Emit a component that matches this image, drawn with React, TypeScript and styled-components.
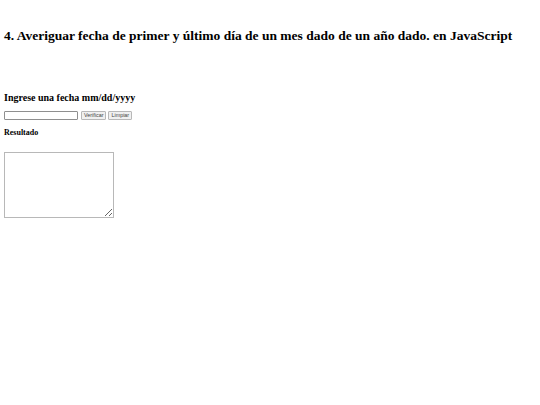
import React from "react";
import styled, { createGlobalStyle } from "styled-components";

const Global = createGlobalStyle`
  html, body { margin: 0; padding: 0; background: #fff; }
  body { font-family: "Liberation Serif", "Times New Roman", serif; color: #000; }
`;

const Page = styled.main`
  padding: 27px 4px 0 4px;
  display: flex;
  flex-direction: column;
`;

const Title = styled.h1`
  margin: 0;
  font-size: 13.5px;
  line-height: 17px;
  font-weight: bold;
  white-space: nowrap;
`;

const Subtitle = styled.h2`
  margin: 47px 0 0 0;
  font-size: 10px;
  line-height: 14px;
  font-weight: bold;
`;

const Form = styled.form`
  margin-top: 6px;
  display: flex;
  align-items: center;
  gap: 2px;
`;

const TextInput = styled.input`
  box-sizing: border-box;
  width: 74px;
  height: 9px;
  margin: 0 1px 0 0;
  padding: 0;
  border: 1px solid #8f8f8f;
  border-radius: 1px;
  background: #fff;
`;

const Button = styled.button`
  box-sizing: border-box;
  height: 9px;
  margin: 0;
  padding: 0 2px;
  border: 1px solid #b8b8b8;
  border-radius: 1px;
  background: #f0f0f0;
  font-family: "Liberation Sans", Arial, sans-serif;
  font-size: 5.4px;
  line-height: 7px;
  color: #444;
`;

const Label = styled.h4`
  margin: 8px 0 0 0;
  font-size: 8px;
  line-height: 10px;
  font-weight: bold;
`;

const Output = styled.textarea`
  box-sizing: border-box;
  margin-top: 14px;
  width: 110px;
  height: 66px;
  border: 1px solid #b8b8b8;
  resize: both;
`;

export default function App() {
  return (
    <>
      <Global />
      <Page>
        <Title>4. Averiguar fecha de primer y último día de un mes dado de un año dado. en JavaScript</Title>
        <Subtitle>Ingrese una fecha mm/dd/yyyy</Subtitle>
        <Form onSubmit={(e) => e.preventDefault()}>
          <TextInput type="text" />
          <Button type="button">Verificar</Button>
          <Button type="button">Limpiar</Button>
        </Form>
        <Label>Resultado</Label>
        <Output readOnly />
      </Page>
    </>
  );
}
